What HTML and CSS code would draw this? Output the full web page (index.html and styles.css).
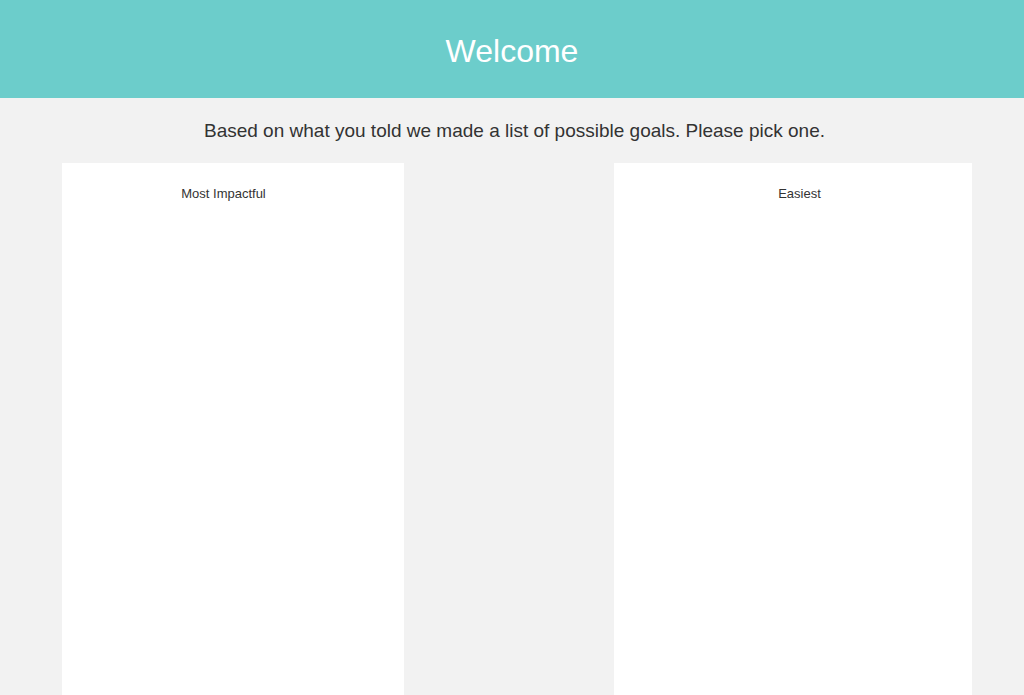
FILE: index.html
```html
<!DOCTYPE html>
<html>
<head>
<meta charset="utf-8">
<link rel="stylesheet" href="styles.css">
</head>
<body>
<header class="header"><h1 class="title">Welcome</h1></header>
<p class="intro">Based on what you told we made a list of possible goals. Please pick one.</p>
<main class="columns">
  <section class="card card-left"><h2 class="card-title">Most Impactful</h2></section>
  <section class="card card-right"><h2 class="card-title">Easiest</h2></section>
</main>
</body>
</html>
```
FILE: styles.css
```css
html, body { margin: 0; padding: 0; height: 100%; }
body {
  background: #f2f2f2;
  font-family: "Liberation Sans", Arial, sans-serif;
  color: #333;
  overflow: hidden;
}
.header {
  background: #6ccdcb;
  height: 98px;
  display: flex;
  align-items: center;
  justify-content: center;
}
.title {
  margin: 0;
  font-size: 32px;
  font-weight: normal;
  color: #fff;
  line-height: 1;
  padding-top: 4px;
}
.intro {
  margin: 0;
  padding: 22px 0 0 5px;
  height: 65px;
  box-sizing: border-box;
  text-align: center;
  font-size: 19px;
  line-height: 21px;
}
.columns {
  display: flex;
  justify-content: space-between;
  padding: 0 52px 0 62px;
  height: 532px;
}
.card {
  background: #fff;
  box-sizing: border-box;
  padding-top: 23px;
}
.card-left { width: 342px; padding-right: 19px; }
.card-right { width: 358px; padding-left: 13px; }
.card-title {
  margin: 0;
  font-size: 13px;
  font-weight: normal;
  text-align: center;
  line-height: 15px;
}
```
